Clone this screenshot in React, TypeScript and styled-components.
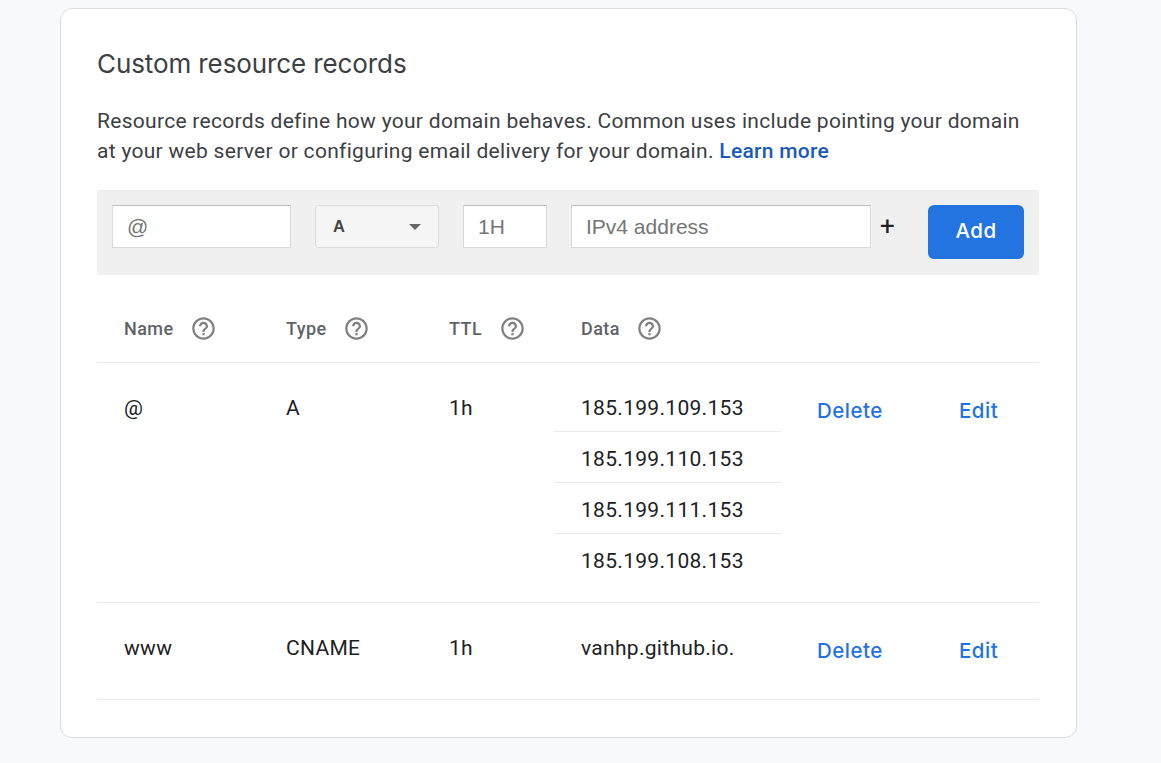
import React from "react";
import styled, { createGlobalStyle, css } from "styled-components";
import { MdHelpOutline } from "react-icons/md";

const GlobalStyle = createGlobalStyle`
  *, *::before, *::after { box-sizing: border-box; }
  body {
    margin: 0;
    background: #f8f9fb;
    color: #202124;
    font-family: Roboto, "Liberation Sans", sans-serif;
  }
`;

const Page = styled.main`
  height: 763px;
  padding: 8px 84px 25px 60px;
`;

const Card = styled.section`
  height: 730px;
  padding: 37px 37px 0 36px;
  background: #fff;
  border: 1px solid #dadce0;
  border-radius: 12px;
`;

const Title = styled.h2`
  margin: 0 0 24px;
  font: 400 26px/36px Inter, sans-serif;
  letter-spacing: -0.1px;
  color: #3c4043;
  white-space: nowrap;
`;

const Description = styled.p`
  margin: 0 0 24px;
  font-size: 21px;
  line-height: 30px;
  letter-spacing: 0.293px;
  color: #3c4043;
  white-space: nowrap;
`;

const LearnMore = styled.a`
  font-weight: 500;
  color: #185abc;
  text-decoration: none;
`;

const RecordForm = styled.form`
  display: flex;
  align-items: flex-start;
  height: 85px;
  padding: 15px;
  background: #f0f0f0;
`;

const Field = styled.input<{ $width: number; $gap?: number }>`
  width: ${(p) => p.$width}px;
  height: 43px;
  margin: 0 ${(p) => p.$gap ?? 24}px 0 0;
  padding: 1px 14px 0;
  border: 1px solid #d9d9d9;
  border-top-color: #c0c0c0;
  border-radius: 1px;
  background: #fff;
  font: 21px "Liberation Sans", sans-serif;
  &::placeholder { color: #757575; opacity: 1; }
`;

const TypeSelect = styled.button`
  display: flex;
  align-items: center;
  justify-content: space-between;
  width: 124px;
  height: 43px;
  margin-right: 24px;
  padding: 0 17px;
  border: 1px solid #dcdcdc;
  border-radius: 3px;
  background: #f5f5f5;
  font: 700 16.5px "Liberation Sans", sans-serif;
  color: #444;
`;

const Caret = styled.span`
  border: 6px solid transparent;
  border-top-color: #666;
  border-bottom: 0;
`;

const PlusButton = styled.button`
  width: 33px;
  height: 43px;
  margin-right: 24px;
  padding: 0 0 0 9px;
  border: 0;
  background: none;
  font: 400 26px/43px Roboto, sans-serif;
  color: #202124;
  text-align: left;
`;

const AddButton = styled.button`
  width: 96px;
  height: 54px;
  padding: 0 0 4px;
  border: 0;
  border-radius: 6px;
  background: #2374e1;
  color: #fff;
  font: 500 20.5px Inter, sans-serif;
  letter-spacing: 0.4px;
`;

const Row = styled.div<{ $header?: boolean }>`
  display: grid;
  grid-template-columns: 162px 163px 132px 227px 1fr;
  border-bottom: 1px solid #e8eaed;
  ${(p) =>
    p.$header
      ? css`
          height: 88px;
          padding-top: 38px;
        `
      : css`
          padding: 18px 0 17px;
        `}
`;

const HeaderCell = styled.div`
  display: flex;
  align-items: center;
  gap: 16.5px;
  height: 30px;
  padding-left: 27px;
  font-size: 18px;
  font-weight: 500;
  letter-spacing: 0.45px;
  color: #5f6368;
`;

const HelpIcon = styled(MdHelpOutline)`
  width: 27px;
  height: 27px;
  color: #808080;
`;

const Cell = styled.div`
  padding: 12px 0 19px 27px;
  font-size: 21px;
  line-height: 30px;
  letter-spacing: 0.3px;
`;

const DataList = styled.ul`
  margin: 0;
  padding: 0;
  list-style: none;
`;

const DataItem = styled.li`
  height: 51px;
  padding: 12px 0 8px 27px;
  border-bottom: 1px solid #e8eaed;
  font-size: 21px;
  line-height: 30px;
  letter-spacing: 0.3px;
  &:last-child { border-bottom: 0; }
`;

const Actions = styled.div`
  display: grid;
  grid-template-columns: 142px auto;
  align-items: start;
  justify-content: start;
  padding: 15px 0 16px 36px;
`;

const ActionButton = styled.button`
  height: 30px;
  padding: 0;
  border: 0;
  background: none;
  color: #1f72e3;
  font: 500 20.5px/30px Inter, sans-serif;
  letter-spacing: 0.5px;
  text-align: left;
`;

const columns = ["Name", "Type", "TTL", "Data"];

const records = [
  {
    name: "@",
    type: "A",
    ttl: "1h",
    data: ["185.199.109.153", "185.199.110.153", "185.199.111.153", "185.199.108.153"],
  },
  { name: "www", type: "CNAME", ttl: "1h", data: ["vanhp.github.io."] },
];

export default function App() {
  return (
    <>
      <GlobalStyle />
      <Page>
        <Card>
          <Title>Custom resource records</Title>
          <Description>
            Resource records define how your domain behaves. Common uses include pointing your domain
            <br />
            at your web server or configuring email delivery for your domain.{" "}
            <LearnMore>Learn more</LearnMore>
          </Description>
          <RecordForm>
            <Field $width={179} placeholder="@" />
            <TypeSelect type="button">
              A<Caret />
            </TypeSelect>
            <Field $width={84} placeholder="1H" />
            <Field $width={300} $gap={0} placeholder="IPv4 address" />
            <PlusButton type="button">+</PlusButton>
            <AddButton type="button">Add</AddButton>
          </RecordForm>
          <Row $header>
            {columns.map((label) => (
              <HeaderCell key={label}>
                {label}
                <HelpIcon />
              </HeaderCell>
            ))}
          </Row>
          {records.map((record) => (
            <Row key={record.name}>
              <Cell>{record.name}</Cell>
              <Cell>{record.type}</Cell>
              <Cell>{record.ttl}</Cell>
              <DataList>
                {record.data.map((value) => (
                  <DataItem key={value}>{value}</DataItem>
                ))}
              </DataList>
              <Actions>
                <ActionButton>Delete</ActionButton>
                <ActionButton>Edit</ActionButton>
              </Actions>
            </Row>
          ))}
        </Card>
      </Page>
    </>
  );
}
